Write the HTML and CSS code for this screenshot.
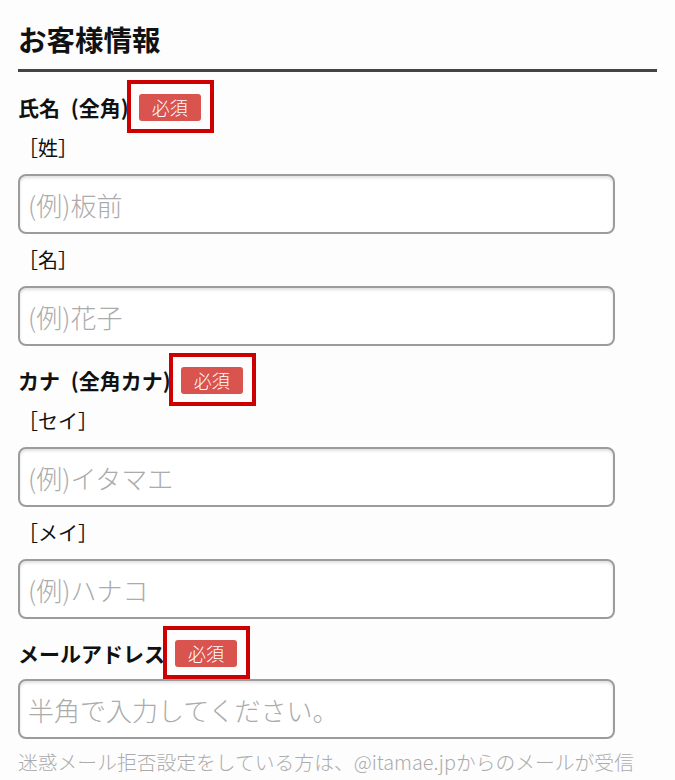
FILE: index.html
```html
<!DOCTYPE html>
<html lang="ja">
<head>
<meta charset="utf-8">
<title>お客様情報</title>
<link rel="stylesheet" href="styles.css">
</head>
<body>
<section class="customer">
  <h2 class="section-title">お客様情報</h2>

  <div class="field">
    <div class="field-label">
      <span class="label-text">氏名 (全角)</span>
      <span class="badge">必須</span>
    </div>
    <div class="sub-label">［姓］</div>
    <input class="text-input" type="text" placeholder="(例)板前">
    <div class="sub-label">［名］</div>
    <input class="text-input" type="text" placeholder="(例)花子">
  </div>

  <div class="field">
    <div class="field-label">
      <span class="label-text">カナ (全角カナ)</span>
      <span class="badge">必須</span>
    </div>
    <div class="sub-label">［セイ］</div>
    <input class="text-input" type="text" placeholder="(例)イタマエ">
    <div class="sub-label">［メイ］</div>
    <input class="text-input" type="text" placeholder="(例)ハナコ">
  </div>

  <div class="field field-email">
    <div class="field-label">
      <span class="label-text">メールアドレス</span>
      <span class="badge">必須</span>
    </div>
    <input class="text-input" type="email" placeholder="半角で入力してください。">
    <p class="note">迷惑メール拒否設定をしている方は、@itamae.jpからのメールが受信</p>
  </div>
</section>
</body>
</html>
```

FILE: styles.css
```css
html, body {
  margin: 0;
  padding: 0;
  background: #fdfdfd;
}

body {
  font-family: "Noto Sans CJK JP", "Noto Sans", sans-serif;
  color: #111;
}

.customer {
  padding: 0 18px;
}

.section-title {
  margin: 0;
  padding-top: 18px;
  padding-bottom: 9px;
  font-size: 28.5px;
  line-height: 42px;
  font-weight: 700;
  border-bottom: 3px solid #444;
}

.field {
  margin-top: 19px;
}

.field:first-of-type {
  margin-top: 20px;
}

.field-label {
  display: flex;
  align-items: center;
  height: 30px;
}

.label-text {
  font-size: 21px;
  font-weight: 700;
  line-height: 30px;
  word-spacing: 6px;
}

.badge {
  position: relative;
  margin-left: 10px;
  display: inline-block;
  background: #d9534f;
  color: #fff;
  font-size: 18px;
  font-weight: 300;
  line-height: 27px;
  padding: 0 13px;
  border-radius: 3px;
}

.badge::after {
  content: "";
  position: absolute;
  top: -14px;
  bottom: -12px;
  left: -12px;
  right: -13px;
  border: 4px solid #cc0000;
}

.sub-label {
  font-size: 20px;
  line-height: 30px;
  padding: 11px 0;
}

.text-input {
  display: block;
  box-sizing: border-box;
  width: 597px;
  height: 60px;
  margin: 0;
  padding: 0 8px;
  font-family: "Noto Sans CJK JP", "Noto Sans", sans-serif;
  font-size: 26px;
  font-weight: 300;
  color: #111;
  background: #fff;
  border: 2px solid #9c9c9c;
  border-radius: 8px;
  box-shadow: inset 0 2px 3px rgba(0, 0, 0, 0.12);
  outline: none;
}

.text-input::placeholder {
  color: #ababab;
}

.field-email .text-input {
  margin-top: 11px;
}

.note {
  margin: 8px 0 0;
  font-size: 19.8px;
  font-weight: 300;
  line-height: 30px;
  color: #ababab;
  white-space: nowrap;
}
```
